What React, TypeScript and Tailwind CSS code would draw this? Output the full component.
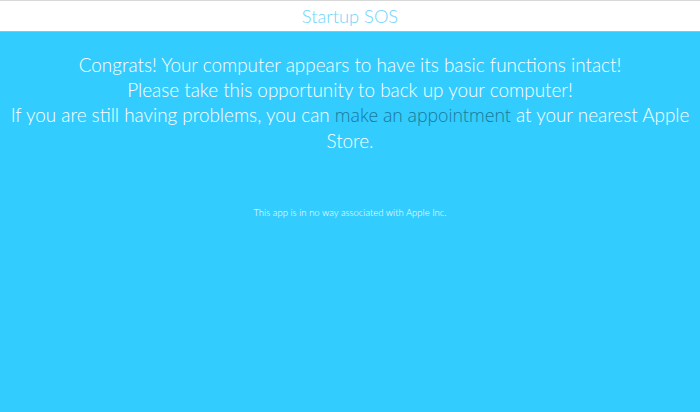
export default function App() {
  return (
    <div className="w-[700px] h-[412px] flex flex-col bg-[#33ccff] overflow-hidden" style={{ fontFamily: "Lato, 'Open Sans', sans-serif" }}>
      <div className="h-[31px] shrink-0 bg-white border-t border-[#d9d9d9] flex items-center justify-center">
        <span className="text-[18.3px] font-light text-[#6fd3fb] leading-none">Startup SOS</span>
      </div>
      <div className="h-px bg-[#5ad6ff] shrink-0" />
      <div className="flex flex-col items-center pt-[20px]">
        <p className="text-[18.9px] leading-[25px] font-light text-white text-center">
          Congrats! Your computer appears to have its basic functions intact!
          <br />
          Please take this opportunity to back up your computer!
          <br />
          If you are still having problems, you can{" "}
          <a className="text-[#187a9c] text-[17.8px]" style={{ fontFamily: "'Open Sans', sans-serif" }}>make an appointment</a> at your nearest Apple
          <br />
          Store.
        </p>
        <p className="mt-[53px] text-[9.5px] font-light text-white text-center">This app is in no way associated with Apple Inc.</p>
      </div>
    </div>
  );
}
